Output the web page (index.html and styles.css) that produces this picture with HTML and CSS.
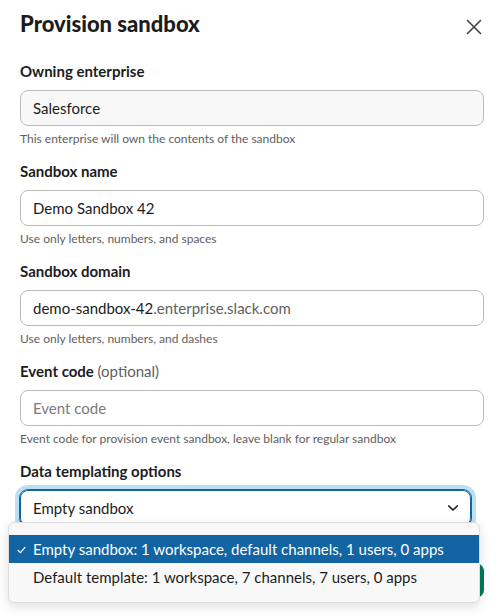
FILE: index.html
```html
<!DOCTYPE html>
<html lang="en">
<head>
<meta charset="utf-8">
<title>Provision sandbox</title>
<link rel="stylesheet" href="styles.css">
</head>
<body>
<div class="modal">
  <div class="header">
    <h1 class="title">Provision sandbox</h1>
    <button class="close" aria-label="Close">
      <svg width="20" height="20" viewBox="0 0 20 20"><path d="M3.5 3.5 L16.5 16.5 M16.5 3.5 L3.5 16.5" stroke="#454245" stroke-width="1.6" stroke-linecap="round" fill="none"/></svg>
    </button>
  </div>

  <div class="field">
    <div class="label">Owning enterprise</div>
    <div class="input disabled">Salesforce</div>
    <div class="hint">This enterprise will own the contents of the sandbox</div>
  </div>

  <div class="field">
    <div class="label">Sandbox name</div>
    <div class="input">Demo Sandbox 42</div>
    <div class="hint">Use only letters, numbers, and spaces</div>
  </div>

  <div class="field">
    <div class="label">Sandbox domain</div>
    <div class="input">demo-sandbox-42<span class="suffix">.enterprise.slack.com</span></div>
    <div class="hint">Use only letters, numbers, and dashes</div>
  </div>

  <div class="field">
    <div class="label">Event code <span class="optional">(optional)</span></div>
    <div class="input placeholder">Event code</div>
    <div class="hint">Event code for provision event sandbox, leave blank for regular sandbox</div>
  </div>

  <div class="field select-field">
    <div class="label">Data templating options</div>
    <div class="select">
      <span>Empty sandbox</span>
      <svg class="chevron" width="12" height="8" viewBox="0 0 12 8"><path d="M1.8 2 L6 6 L10.2 2" stroke="#1d1c1d" stroke-width="1.7" stroke-linecap="round" stroke-linejoin="round" fill="none"/></svg>
    </div>
    <div class="menu">
      <div class="option selected">
        <svg class="check" width="9" height="8" viewBox="0 0 9 8"><path d="M1 4.3 L3.4 6.6 L8 1.4" stroke="#ffffff" stroke-width="1.2" stroke-linecap="round" stroke-linejoin="round" fill="none"/></svg>
        Empty sandbox: 1 workspace, default channels, 1 users, 0 apps
      </div>
      <div class="option">Default template: 1 workspace, 7 channels, 7 users, 0 apps</div>
    </div>
  </div>

  <div class="footer">
    <button class="btn primary">Next</button>
  </div>
</div>
</body>
</html>
```
FILE: styles.css
```css
html, body {
  margin: 0;
  padding: 0;
  background: #ffffff;
}
body {
  font-family: Lato, "Noto Sans", sans-serif;
  color: #1d1c1d;
  overflow: hidden;
}
.modal {
  box-sizing: border-box;
  min-height: 615px;
  padding: 11px 14px 0 20px;
}
.header {
  display: flex;
  justify-content: space-between;
  align-items: flex-start;
  height: 26px;
  margin-bottom: 23px;
}
.title {
  margin: 0;
  font-size: 22px;
  line-height: 26px;
  font-weight: 900;
}
.close {
  margin: 6px 0 0 0;
  padding: 0;
  border: 0;
  background: none;
  width: 20px;
  height: 20px;
  display: block;
}
.close svg { display: block; }
.field {
  margin-bottom: 12px;
}
.label {
  font-size: 15px;
  line-height: 22px;
  font-weight: 700;
  margin-bottom: 8px;
}
.optional {
  font-weight: 400;
  color: #616061;
}
.input {
  box-sizing: border-box;
  height: 36px;
  border: 1px solid #bbbbbb;
  border-radius: 8px;
  padding: 0 12px;
  font-size: 15px;
  line-height: 34px;
  background: #ffffff;
}
.input.disabled {
  background: #f8f8f8;
}
.input.placeholder {
  color: #7c7a7f;
}
.suffix {
  color: #616061;
}
.hint {
  margin-top: 4px;
  font-size: 12px;
  line-height: 18px;
  color: #616061;
}
.select-field {
  position: relative;
  margin-bottom: 0;
}
.select {
  box-sizing: border-box;
  width: calc(100% - 13px);
  height: 36px;
  border: 1px solid #1264a3;
  border-radius: 8px;
  box-shadow: 0 0 0 1px #1264a3, 0 0 0 5px rgba(29, 155, 209, 0.3);
  padding: 0 11px 0 12px;
  font-size: 15px;
  display: flex;
  align-items: center;
  justify-content: space-between;
}
.chevron { display: block; }
.menu {
  position: absolute;
  top: 62px;
  left: -12px;
  width: 472px;
  box-sizing: border-box;
  background: #f8f8f8;
  border: 1px solid #dddddd;
  border-radius: 6px;
  box-shadow: 0 4px 12px rgba(0, 0, 0, 0.12);
  padding: 12px 0 11px;
  z-index: 5;
}
.option {
  position: relative;
  height: 28px;
  line-height: 28px;
  padding-left: 24px;
  font-size: 15px;
  color: #1d1c1d;
  white-space: nowrap;
}
.option.selected {
  background: #1264a3;
  color: #ffffff;
}
.check {
  position: absolute;
  left: 8px;
  top: 11px;
}
.footer {
  display: flex;
  justify-content: flex-end;
  margin-top: 37px;
}
.btn {
  height: 35px;
  padding: 0 16px;
  border-radius: 8px;
  border: 1px solid #bbbbbb;
  background: #ffffff;
  font-family: Lato, "Noto Sans", sans-serif;
  font-size: 15px;
  font-weight: 700;
  color: #1d1c1d;
}
.btn.primary {
  background: #007a5a;
  border-color: #007a5a;
  color: #ffffff;
}
```
